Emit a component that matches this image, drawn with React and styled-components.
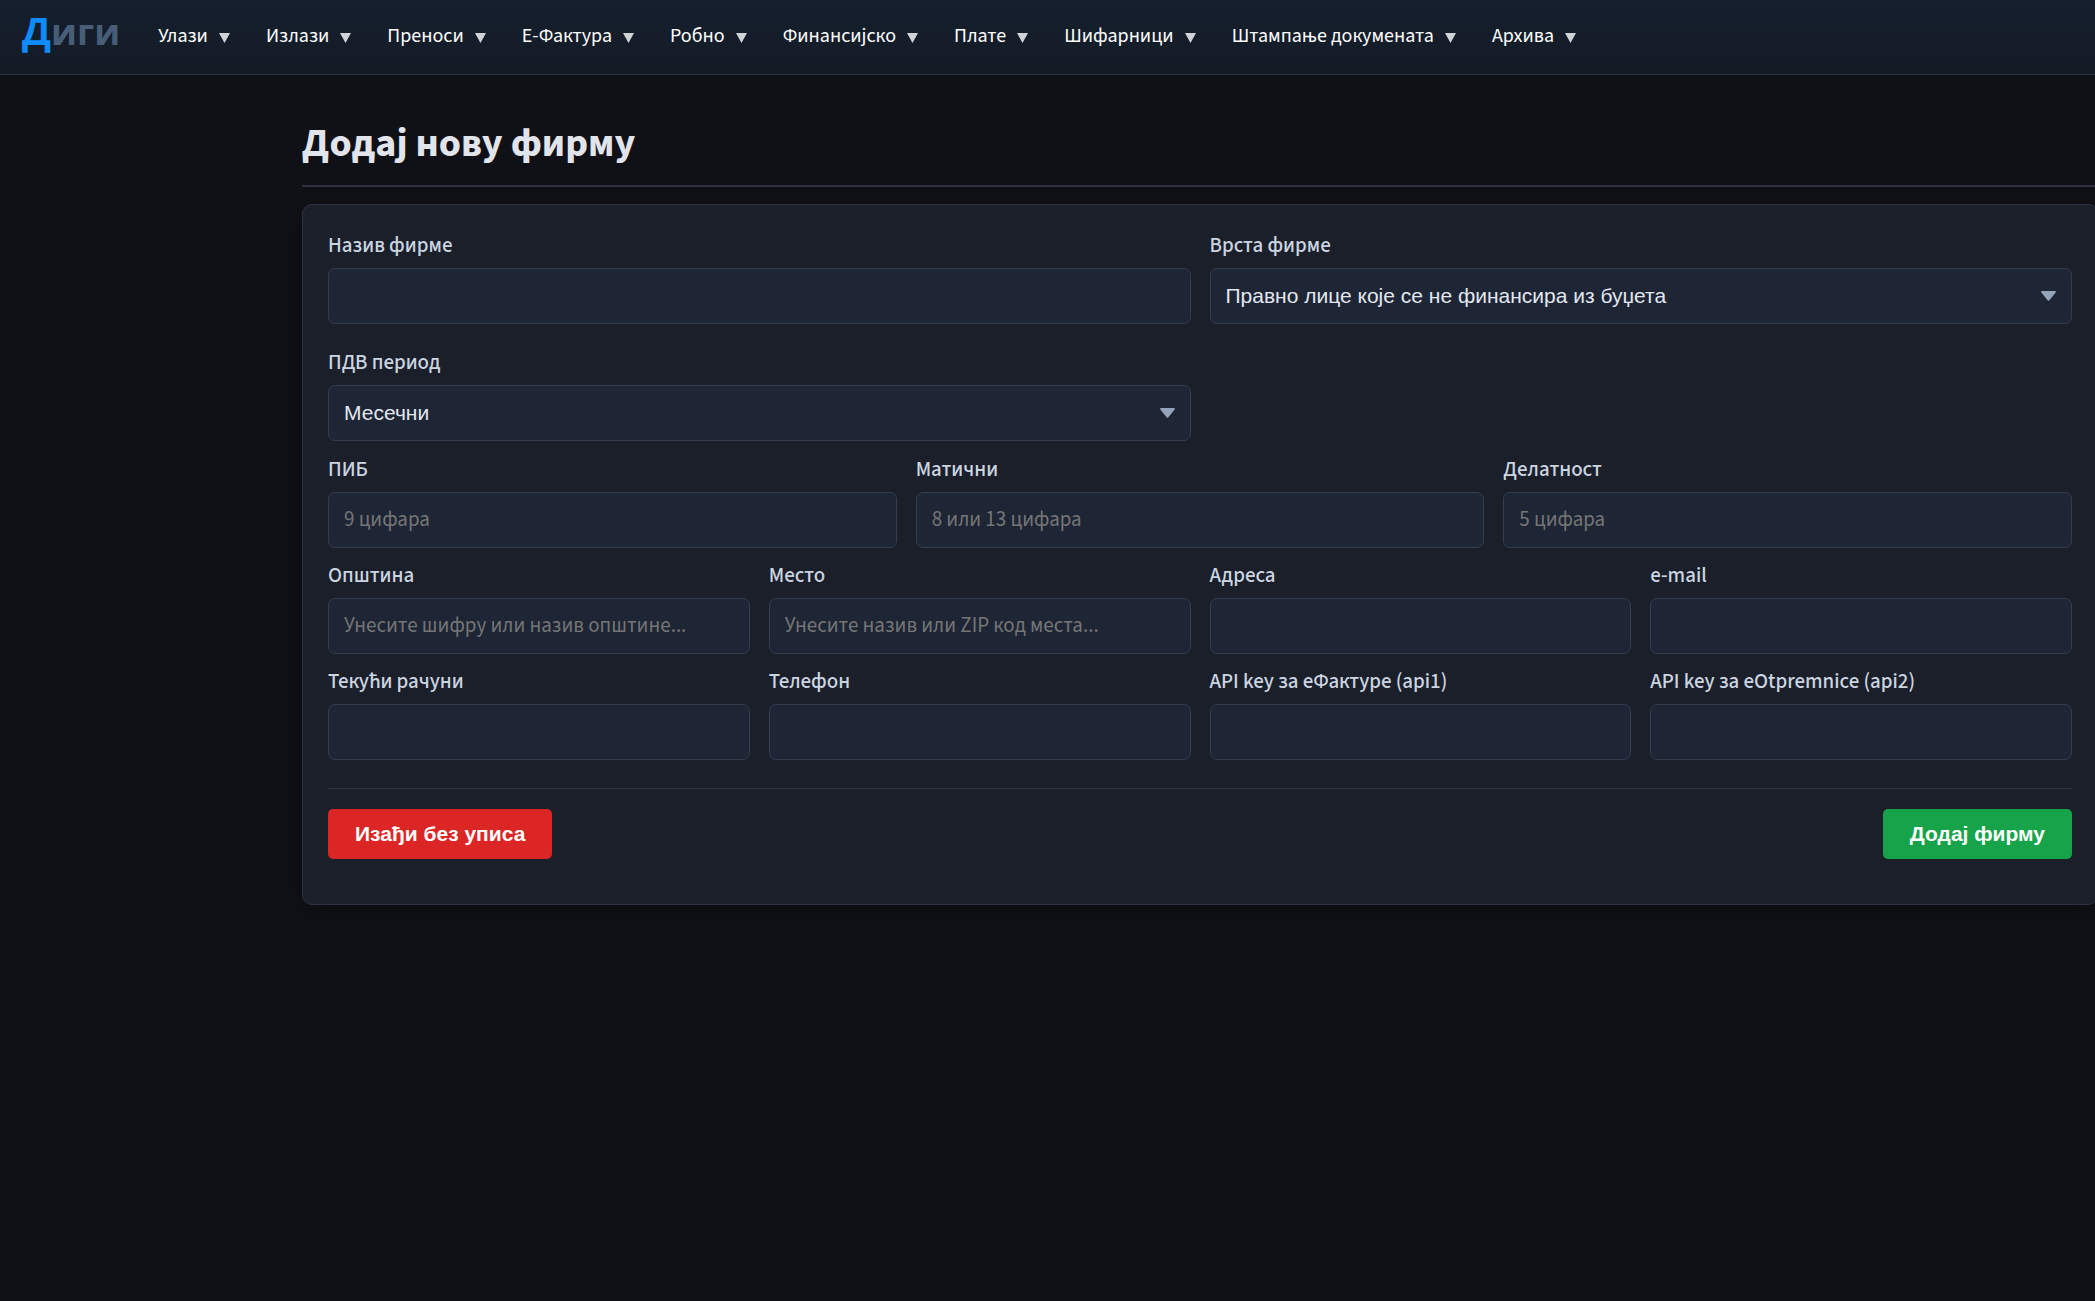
import React, { useState } from 'react'
import styled, { createGlobalStyle, css } from 'styled-components'

const sans = '"Source Sans 3", "Noto Sans CJK SC", "Noto Sans", sans-serif'
const arial = '"Liberation Sans", Arial, sans-serif'

const GlobalStyle = createGlobalStyle`
  * {
    box-sizing: border-box;
  }
  body {
    margin: 0;
    background: #101116;
    color: #e2e4ec;
    font-family: ${sans};
  }
`

const Page = styled.div`
  min-height: 100vh;
  overflow: hidden;
`

const Header = styled.header`
  display: flex;
  align-items: center;
  height: 75px;
  padding: 0 22px 2px;
  background: linear-gradient(to bottom, #161f2e, #131b25);
  border-bottom: 1px solid #263340;
`

const Logo = styled.a`
  margin-right: 20px;
  padding-bottom: 10px;
  font: 700 36px/48px "Open Sans", sans-serif;
  color: #475d78;
  text-decoration: none;
`

const LogoInitial = styled.span`
  font-size: 38px;
  color: #0d8bff;
`

const Nav = styled.nav`
  display: flex;
`

const NavItem = styled.button`
  display: flex;
  align-items: center;
  gap: 11px;
  padding: 10px 18px;
  border: none;
  background: none;
  color: #fff;
  font: 400 20px/30px ${sans};
  white-space: nowrap;
  cursor: pointer;
`

const NavArrow = styled.svg`
  width: 11px;
  height: 10px;
  margin-top: 3px;
  fill: #d0d2d5;
`

const Main = styled.main`
  margin-right: -3px;
  padding: 39px 0 0 302px;
`

const Title = styled.h1`
  margin: 0 0 17px;
  padding-bottom: 11px;
  border-bottom: 2px solid #2d3246;
  font-size: 40px;
  line-height: 60px;
  font-weight: 700;
`

const Card = styled.form`
  display: flex;
  flex-direction: column;
  gap: 12px;
  padding: 25px 25px 45px;
  background: #1b1f29;
  border: 1px solid #2d3246;
  border-radius: 10px;
  box-shadow: 0 5px 20px rgba( 0, 0, 0, .3 );
`

const TopRows = styled.div`
  display: grid;
  gap: 23px;
  padding-bottom: 1px;
`

const Row = styled.div`
  display: grid;
  grid-template-columns: repeat(${props => props.$columns}, 1fr);
  gap: 19px;
`

const FieldWrapper = styled.div`
  display: flex;
  flex-direction: column;
  gap: 8px;
  min-width: 0;
`

const Label = styled.label`
  color: #cbd5e1;
  font-size: 21px;
  font-weight: 500;
  line-height: 30px;
`

const control = css`
  width: 100%;
  height: 56px;
  padding: 0 15px;
  border: 1px solid #353d50;
  border-radius: 7px;
  outline: 0;
  background: #1e2535;
  color: #e2e8f0;
  &:focus {
    border-color: #0d8bff;
  }
`

const Input = styled.input`
  ${control}
  padding-bottom: 2px;
  font: 400 21px/30px ${sans};
  &::placeholder {
    color: #757575;
  }
`

const SelectWrapper = styled.div`
  position: relative;
`

const Select = styled.select`
  ${control}
  display: block;
  appearance: none;
  font: 400 21px/30px ${arial};
`

const SelectArrow = styled.svg`
  position: absolute;
  top: 23px;
  right: 16px;
  width: 15px;
  height: 10px;
  fill: #94a3b8;
  pointer-events: none;
`

const Actions = styled.div`
  display: flex;
  justify-content: space-between;
  margin-top: 16px;
  padding-top: 20px;
  border-top: 1px solid #2d3246;
`

const Button = styled.button`
  padding: 10px 27px;
  border: none;
  border-radius: 5px;
  background: ${props => props.$primary ? '#16a34a' : '#dc2626'};
  color: #fff;
  font: 700 21px/30px ${arial};
  cursor: pointer;
`

const menu = [
  'Улази',
  'Излази',
  'Преноси',
  'Е-Фактура',
  'Робно',
  'Финансијско',
  'Плате',
  'Шифарници',
  'Штампање докумената',
  'Архива'
]

const companyTypes = [
  'Правно лице које се не финансира из буџета',
  'Правно лице које се финансира из буџета',
  'Предузетник'
]

const rows = [
  {
    columns: 3,
    fields: [
      { id: 'pib', label: 'ПИБ', placeholder: '9 цифара' },
      { id: 'maticni', label: 'Матични', placeholder: '8 или 13 цифара' },
      { id: 'delatnost', label: 'Делатност', placeholder: '5 цифара' }
    ]
  },
  {
    columns: 4,
    fields: [
      { id: 'opstina', label: 'Општина', placeholder: 'Унесите шифру или назив општине...' },
      { id: 'mesto', label: 'Место', placeholder: 'Унесите назив или ZIP код места...' },
      { id: 'adresa', label: 'Адреса' },
      { id: 'email', label: 'e-mail' }
    ]
  },
  {
    columns: 4,
    fields: [
      { id: 'racuni', label: 'Текући рачуни' },
      { id: 'telefon', label: 'Телефон' },
      { id: 'api1', label: 'API key за еФактуре (api1)' },
      { id: 'api2', label: 'API key за eOtpremnice (api2)' }
    ]
  }
]

const Field = ({ id, label, children, ...rest }) => (
  <FieldWrapper>
    <Label htmlFor={id}>{label}</Label>
    {children || <Input id={id} name={id} type='text' {...rest} />}
  </FieldWrapper>
)

const Dropdown = ({ id, options }) => {
  const [value, setValue] = useState(options[0])
  return (
    <SelectWrapper>
      <Select id={id} name={id} value={value} onChange={e => setValue(e.target.value)}>
        {options.map(option => <option key={option}>{option}</option>)}
      </Select>
      <SelectArrow viewBox='0 0 15 10' aria-hidden='true'>
        <path d='M1 0h13a1 1 0 0 1 .7 1.6L8.2 9.5a1 1 0 0 1-1.4 0L.3 1.6A1 1 0 0 1 1 0z' />
      </SelectArrow>
    </SelectWrapper>
  )
}

const App = () => (
  <Page>
    <GlobalStyle />
    <Header>
      <Logo href='#'><LogoInitial>Д</LogoInitial>иги</Logo>
      <Nav>
        {menu.map(item => (
          <NavItem key={item} type='button'>
            {item}
            <NavArrow viewBox='0 0 11 10' aria-hidden='true'>
              <path d='M0 0h11L5.5 10z' />
            </NavArrow>
          </NavItem>
        ))}
      </Nav>
    </Header>
    <Main>
      <Title>Додај нову фирму</Title>
      <Card onSubmit={e => e.preventDefault()}>
        <TopRows>
          <Row $columns={2}>
            <Field id='naziv' label='Назив фирме' />
            <Field id='vrsta' label='Врста фирме'>
              <Dropdown id='vrsta' options={companyTypes} />
            </Field>
          </Row>
          <Row $columns={2}>
            <Field id='pdv' label='ПДВ период'>
              <Dropdown id='pdv' options={['Месечни', 'Тромесечни']} />
            </Field>
          </Row>
        </TopRows>
        {rows.map(row => (
          <Row key={row.fields[0].id} $columns={row.columns}>
            {row.fields.map(field => <Field key={field.id} {...field} />)}
          </Row>
        ))}
        <Actions>
          <Button type='button'>Изађи без уписа</Button>
          <Button type='submit' $primary>Додај фирму</Button>
        </Actions>
      </Card>
    </Main>
  </Page>
)

export default App
